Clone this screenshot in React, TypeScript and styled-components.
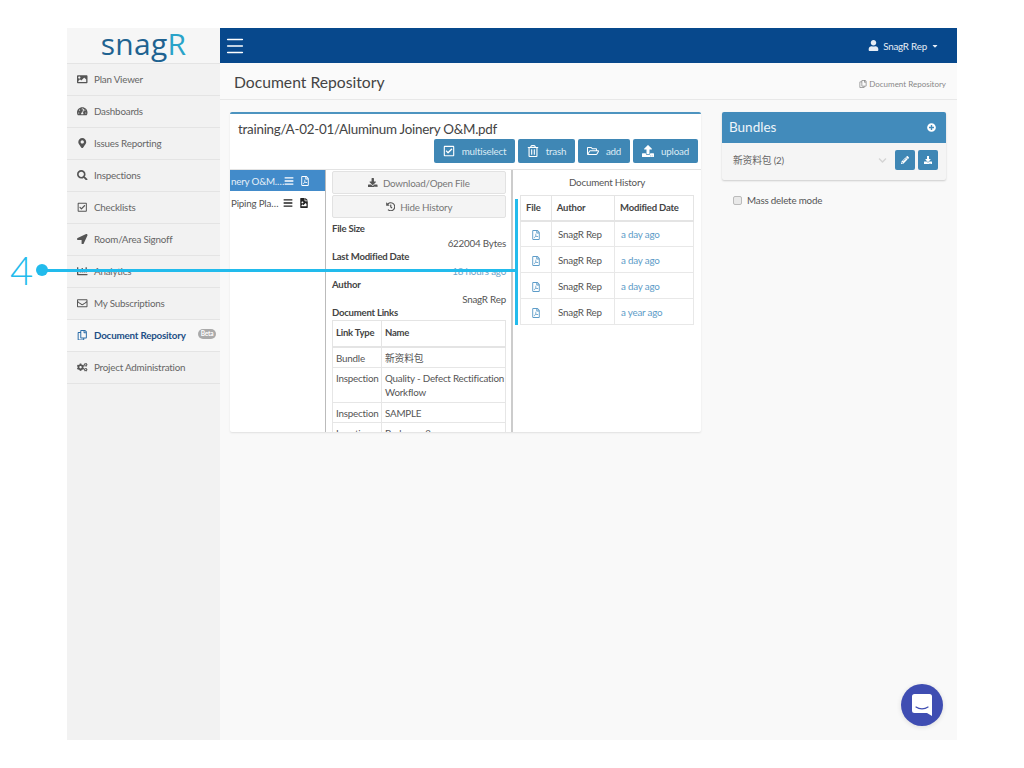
import React from "react";
import styled, { createGlobalStyle } from "styled-components";
import { Menu } from "lucide-react";
import {
  FaImage, FaTachometerAlt, FaMapMarkerAlt, FaSearch, FaRegCheckSquare, FaLocationArrow,
  FaChartBar, FaRegEnvelope, FaRegCopy, FaCogs, FaUser, FaCaretDown, FaBars, FaRegFilePdf,
  FaFileImage, FaDownload, FaHistory, FaRegTrashAlt, FaRegFolderOpen, FaUpload, FaPlusCircle,
  FaPencilAlt, FaChevronDown,
} from "react-icons/fa";

const SANS = `"Lato", "Noto Sans CJK SC", sans-serif`;
const Global = createGlobalStyle`
  html, body { margin: 0; padding: 0; background: #fff; }
  body { font-family: ${SANS}; color: #555; width: 1024px; height: 768px; overflow: hidden; letter-spacing: -.2px; }
  button { letter-spacing: inherit; }
  * { box-sizing: border-box; }
`;
const Page = styled.div`position: relative; width: 1024px; height: 768px; padding: 28px 67px;`;
const Frame = styled.div`display: flex; width: 890px; height: 712px; background: #f9f9f9;`;
const Sidebar = styled.aside`width: 153px; flex: none; background: #f2f2f2;`;
const LogoBox = styled.div`height: 36px; display: flex; justify-content: center; align-items: center; background: #f6f6f6; border-bottom: 1px solid #e4e4e4;
  font-family: "Open Sans", sans-serif; font-weight: 500; font-size: 30px; line-height: 36px; color: #1f6391; letter-spacing: .3px; padding-bottom: 4px;`;
const LogoR = styled.span`color: #2aa3c9;`;
const NavItem = styled.div<{ $active?: boolean }>`height: 32px; display: flex; align-items: center; padding: 0 0 1px 10px; border-bottom: 1px solid #e4e4e4;
  font-size: 9.800px; position: relative; color: ${p => (p.$active ? "#1d4f86" : "#666")}; font-weight: ${p => (p.$active ? 700 : 400)};
  background: ${p => (p.$active ? "#f7f7f7" : "transparent")};`;
const NavIcon = styled.span<{ $active?: boolean }>`width: 17px; display: flex; font-size: 10.500px; color: ${p => (p.$active ? "#2a6ca8" : "#555")};`;
const Beta = styled.span`position: absolute; left: 131px; top: 9px; width: 18px; height: 10px; border-radius: 5px; background: #aaa; color: #fff;
  font-size: 6.500px; font-weight: 700; line-height: 10px; text-align: center;`;
const Main = styled.main`flex: 1; min-width: 0; display: flex; flex-direction: column;`;
const TopBar = styled.header`height: 35px; background: #07488c; color: #fff; display: flex; align-items: center; justify-content: space-between; padding: 0 18px 0 4px;`;
const Burger = styled.span`display: flex;`;
const UserMenu = styled.div`display: flex; align-items: center; gap: 4px; font-size: 9.800px; color: #e6edf5;`;
const CaretIcon = styled.span`display: flex; font-size: 8px;`;
const HeadBand = styled.div`height: 37px; display: flex; align-items: center; justify-content: space-between; padding: 0 11px 0 14px; background: #fafafa; border-bottom: 1px solid #e8e8e8;`;
const PageTitle = styled.h1`margin: 0; padding-top: 2px; font-size: 15.700px; line-height: 35px; font-weight: 400; color: #444; letter-spacing: 0;`;
const Crumb = styled.div`display: flex; align-items: center; gap: 2px; font-size: 8px; letter-spacing: 0; color: #888; padding-top: 5px;`;
const Columns = styled.div`display: flex; align-items: flex-start; padding: 12px 11px 0 10px; gap: 21px;`;
const DocPanel = styled.section`width: 471px; height: 320px; flex: none; background: #fff; border-top: 2px solid #4d94c0; border-radius: 2px; box-shadow: 0 1px 2px rgba(0,0,0,.1); display: flex; flex-direction: column; overflow: hidden;`;
const DocHead = styled.div`height: 56px; flex: none; padding: 6px 3px 0 8px; border-bottom: 1px solid #e3e3e3;`;
const DocTitle = styled.div`font-size: 13.400px; letter-spacing: -.25px; line-height: 19px; color: #444;`;
const ToolRow = styled.div`display: flex; justify-content: flex-end; gap: 3px;`;
const ToolBtn = styled.button<{ $w: number }>`width: ${p => p.$w}px; height: 24px; border: 0; border-radius: 2px; background: #3f87b5; color: #dcebf4; font: 400 9.800px ${SANS};
  display: flex; justify-content: center; align-items: center; gap: 7px; padding: 0;`;
const ToolIcon = styled.span`display: flex; font-size: 12px; color: #fff;`;
const DocBody = styled.div`flex: 1; min-height: 0; display: flex; overflow: hidden;`;
const FileList = styled.div`width: 95px; flex: none;`;
const FileRow = styled.div<{ $on?: boolean }>`height: 21px; display: flex; align-items: center; justify-content: space-between; padding: 0 16px 0 1px; margin-bottom: 1px; white-space: nowrap; font-size: 9.800px;
  background: ${p => (p.$on ? "#428bca" : "transparent")}; color: ${p => (p.$on ? "#e6f0f8" : "#555")};`;
const FileIcons = styled.span<{ $on?: boolean }>`display: flex; gap: 6px; font-size: 10px; color: ${p => (p.$on ? "#fff" : "#222")};`;
const Detail = styled.div`width: 188px; flex: none; padding: 1px 5px 0 6px; border-left: 1px solid #bbb; border-right: 2px solid #ccc;`;
const GreyBtn = styled.button`width: 100%; height: 23px; margin-bottom: 1px; border: 1px solid #e2e2e2; border-radius: 2px; background: #f4f4f4; color: #777; font: 400 9.800px ${SANS};
  display: flex; justify-content: center; align-items: center; gap: 5px; padding: 0;`;
const GreyIcon = styled.span`display: flex; font-size: 9.500px; color: #555;`;
const Label = styled.div<{ $first?: boolean }>`font-size: 9.600px; letter-spacing: -.25px; line-height: 14px; font-weight: 700; color: #444; margin-top: ${p => (p.$first ? "4px" : "0")};`;
const Value = styled.div<{ $link?: boolean }>`font-size: 9.800px; line-height: 14px; text-align: right; color: ${p => (p.$link ? "#6aa3c9" : "#555")};`;
const Table = styled.table`width: 100%; border-collapse: collapse; font-size: 9.800px; line-height: 14px; table-layout: fixed;`;
const Th = styled.th<{ $w?: number; $h?: number }>`border: 1px solid #e4e4e4; border-bottom-width: 2px; text-align: left; font-weight: 700; font-size: 9.500px; color: #444; padding: 0 3px; height: ${p => p.$h ?? 26}px; ${p => (p.$w ? `width: ${p.$w}px;` : "")}`;
const Td = styled.td`border: 1px solid #e6e6e6; padding: 3px 0 2.500px 3px; color: #555; vertical-align: top;`;
const HistCell = styled.td<{ $link?: boolean; $center?: boolean }>`border: 1px solid #e8e8e8; height: 26px; padding: 0 6px; color: ${p => (p.$link ? "#5d9cc8" : "#555")}; text-align: ${p => (p.$center ? "center" : "left")};`;
const History = styled.div`flex: 1; min-width: 0; padding: 0 7px;`;
const HistTitle = styled.div`font-size: 9.800px; line-height: 25px; text-align: center; color: #555;`;
const PdfIcon = styled(FaRegFilePdf)`font-size: 10px; color: #5d9cc8; vertical-align: middle;`;
const Side = styled.aside`flex: 1; min-width: 0;`;
const BundleCard = styled.section`height: 68px; border-radius: 2px; background: #f5f5f5; box-shadow: 0 1px 2px rgba(0,0,0,.18); overflow: hidden;`;
const BundleHead = styled.div`height: 31px; background: #428bbb; color: #eef5fa; font-size: 13.500px; letter-spacing: 0; display: flex; align-items: center; justify-content: space-between; padding: 0 10px 1px 7px;`;
const PlusIcon = styled.span`display: flex; font-size: 9px; color: #fff;`;
const BundleRow = styled.div`height: 35px; display: flex; align-items: center; padding: 0 8px 1px 11px; font-size: 9.800px; color: #666;`;
const BundleName = styled.span`flex: 1;`;
const Chevron = styled.span`display: flex; font-size: 9px; color: #d5d5d5; margin-right: 5px;`;
const SmallBtn = styled.button`width: 20px; height: 20px; margin-left: 3px; border: 0; border-radius: 2px; background: #3f87b5; color: #fff; font-size: 8px; display: flex; align-items: center; justify-content: center; padding: 0;`;
const MassRow = styled.label`display: flex; align-items: center; gap: 5px; padding: 13px 0 0 11px; font-size: 9.800px; line-height: 14px; color: #555;`;
const Check = styled.span`width: 9px; height: 9px; border: 1px solid #bbb; border-radius: 2px; background: #e9e9e9;`;
const Launcher = styled.div`position: absolute; left: 901px; top: 684px; width: 42px; height: 42px; border-radius: 50%; background: #3f4db2; display: flex; align-items: center; justify-content: center; box-shadow: 0 1px 5px rgba(0,0,0,.12);`;
const Marker = styled.div`position: absolute; left: 10px; top: 246px; font: 300 40px/48px "Lato", sans-serif; letter-spacing: 0; color: #22bbec;`;
const Dot = styled.div`position: absolute; left: 36px; top: 264px; width: 12px; height: 12px; border-radius: 50%; background: #22bbec;`;
const HLine = styled.div`position: absolute; left: 42px; top: 269px; width: 474px; height: 3px; background: #22bbec;`;
const VLine = styled.div`position: absolute; left: 515px; top: 199px; width: 3px; height: 126px; background: #22bbec;`;

const nav = [
  [FaImage, "Plan Viewer"], [FaTachometerAlt, "Dashboards"], [FaMapMarkerAlt, "Issues Reporting"], [FaSearch, "Inspections"],
  [FaRegCheckSquare, "Checklists"], [FaLocationArrow, "Room/Area Signoff"], [FaChartBar, "Analytics"], [FaRegEnvelope, "My Subscriptions"],
  [FaRegCopy, "Document Repository"], [FaCogs, "Project Administration"],
] as const;
const hist = ["a day ago", "a day ago", "a day ago", "a year ago"];

export default function App() {
  return (
    <Page>
      <Global />
      <Frame>
        <Sidebar>
          <LogoBox>snag<LogoR>R</LogoR></LogoBox>
          {nav.map(([I, t]) => {
            const on = t === "Document Repository";
            return (
              <NavItem key={t} $active={on}>
                <NavIcon $active={on}><I /></NavIcon>{t}{on && <Beta>Beta</Beta>}
              </NavItem>
            );
          })}
        </Sidebar>
        <Main>
          <TopBar>
            <Burger><Menu size={22} strokeWidth={1.7} /></Burger>
            <UserMenu><FaUser size={11} /> SnagR Rep <CaretIcon><FaCaretDown /></CaretIcon></UserMenu>
          </TopBar>
          <HeadBand>
            <PageTitle>Document Repository</PageTitle>
            <Crumb><FaRegCopy size={8} /> Document Repository</Crumb>
          </HeadBand>
          <Columns>
            <DocPanel>
              <DocHead>
                <DocTitle>training/A-02-01/Aluminum Joinery O&amp;M.pdf</DocTitle>
                <ToolRow>
                  <ToolBtn $w={81}><ToolIcon><FaRegCheckSquare /></ToolIcon>multiselect</ToolBtn>
                  <ToolBtn $w={57}><ToolIcon><FaRegTrashAlt /></ToolIcon>trash</ToolBtn>
                  <ToolBtn $w={52}><ToolIcon><FaRegFolderOpen /></ToolIcon>add</ToolBtn>
                  <ToolBtn $w={65}><ToolIcon><FaUpload /></ToolIcon>upload</ToolBtn>
                </ToolRow>
              </DocHead>
              <DocBody>
                <FileList>
                  <FileRow $on><span>nery O&amp;M.…</span><FileIcons $on><FaBars /><FaRegFilePdf /></FileIcons></FileRow>
                  <FileRow><span>Piping Pla…</span><FileIcons><FaBars /><FaFileImage /></FileIcons></FileRow>
                </FileList>
                <Detail>
                  <GreyBtn><GreyIcon><FaDownload /></GreyIcon>Download/Open File</GreyBtn>
                  <GreyBtn><GreyIcon><FaHistory /></GreyIcon>Hide History</GreyBtn>
                  <Label $first>File Size</Label>
                  <Value>622004 Bytes</Value>
                  <Label>Last Modified Date</Label>
                  <Value $link>18 hours ago</Value>
                  <Label>Author</Label>
                  <Value>SnagR Rep</Value>
                  <Label>Document Links</Label>
                  <Table>
                    <thead><tr><Th $w={49}>Link Type</Th><Th>Name</Th></tr></thead>
                    <tbody>
                      <tr><Td>Bundle</Td><Td>新资料包</Td></tr>
                      <tr><Td>Inspection</Td><Td>Quality - Defect Rectification Workflow</Td></tr>
                      <tr><Td>Inspection</Td><Td>SAMPLE</Td></tr>
                      <tr><Td>Location</Td><Td>Bedroom 2</Td></tr>
                    </tbody>
                  </Table>
                </Detail>
                <History>
                  <HistTitle>Document History</HistTitle>
                  <Table>
                    <thead><tr><Th $w={31} $h={25}>&nbsp;File</Th><Th $w={63} $h={25}>&nbsp;Author</Th><Th $h={25}>&nbsp;Modified Date</Th></tr></thead>
                    <tbody>
                      {hist.map((h, i) => (
                        <tr key={i}>
                          <HistCell $center><PdfIcon /></HistCell>
                          <HistCell>SnagR Rep</HistCell>
                          <HistCell $link>{h}</HistCell>
                        </tr>
                      ))}
                    </tbody>
                  </Table>
                </History>
              </DocBody>
            </DocPanel>
            <Side>
              <BundleCard>
                <BundleHead>Bundles<PlusIcon><FaPlusCircle /></PlusIcon></BundleHead>
                <BundleRow>
                  <BundleName>新资料包 (2)</BundleName>
                  <Chevron><FaChevronDown /></Chevron>
                  <SmallBtn><FaPencilAlt /></SmallBtn>
                  <SmallBtn><FaDownload /></SmallBtn>
                </BundleRow>
              </BundleCard>
              <MassRow><Check />Mass delete mode</MassRow>
            </Side>
          </Columns>
        </Main>
      </Frame>
      <Marker>4</Marker>
      <HLine />
      <Dot />
      <VLine />
      <Launcher>
        <svg width="20" height="22" viewBox="0 0 20 22">
          <path d="M2.5 0h15A2.5 2.5 0 0 1 20 2.5V22l-5-3H2.5A2.5 2.5 0 0 1 0 16.500V2.500A2.500 2.500 0 0 1 2.500 0z" fill="#fff" />
          <path d="M4 13c3.500 2.500 8.500 2.500 12 0" fill="none" stroke="#3f4db2" strokeWidth="1.200" strokeLinecap="round" />
        </svg>
      </Launcher>
    </Page>
  );
}
